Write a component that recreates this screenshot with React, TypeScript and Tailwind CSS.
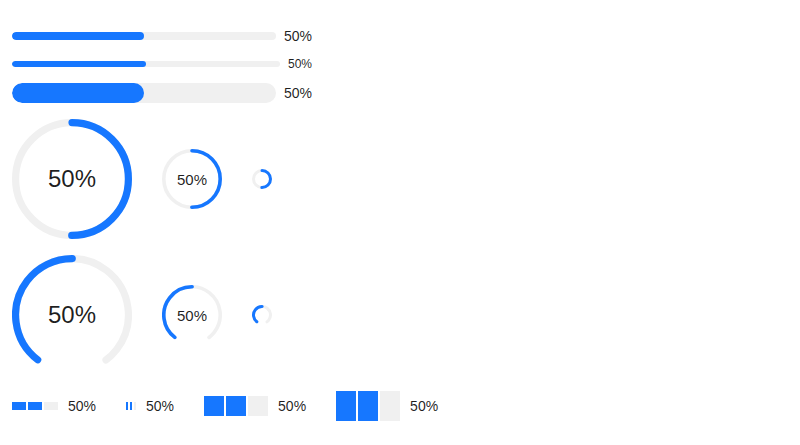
import React from "react";

const BLUE = "#1677ff";
const TRACK = "#f0f0f0";
const TEXT = "text-[rgba(0,0,0,0.88)]";

function Line({ h, small }: { h: number; small?: boolean }) {
  return (
    <div className={`flex items-center w-[300px] ${small ? "h-[20px]" : "h-[22px]"}`}>
      <div className="flex-1 rounded-full bg-[#f0f0f0] overflow-hidden" style={{ height: h }}>
        <div className="h-full w-1/2 rounded-full bg-[#1677ff]" />
      </div>
      <span
        className={`${small ? "text-[12px] w-[32px]" : "text-[14px] w-[36px]"} pl-[8px] whitespace-nowrap ${TEXT}`}
      >
        50%
      </span>
    </div>
  );
}

function Circle({ size, dashboard }: { size: number; dashboard?: boolean }) {
  const sw = size <= 20 ? 15 : 6;
  const r = 50 - sw / 2;
  const c = 2 * Math.PI * r;
  const gap = dashboard ? 75 : 0;
  const visible = c * (1 - gap / 360);
  const rot = dashboard ? 90 + gap / 2 : -90;
  const font = size >= 100 ? "text-[24px]" : "text-[15px]";
  return (
    <div className="relative flex items-center justify-center" style={{ width: size, height: size }}>
      <svg viewBox="0 0 100 100" width={size} height={size} className="absolute inset-0">
        <g transform={`rotate(${rot} 50 50)`}>
          <circle
            cx="50"
            cy="50"
            r={r}
            fill="none"
            stroke={TRACK}
            strokeWidth={sw}
            strokeLinecap="round"
            strokeDasharray={`${visible} ${c}`}
          />
          <circle
            cx="50"
            cy="50"
            r={r}
            fill="none"
            stroke={BLUE}
            strokeWidth={sw}
            strokeLinecap="round"
            strokeDasharray={`${visible / 2} ${c}`}
          />
        </g>
      </svg>
      {size > 20 && <span className={`relative ${font} ${TEXT} leading-none`}>50%</span>}
    </div>
  );
}

function Steps({ w, h }: { w: number; h: number }) {
  return (
    <div className="flex items-center">
      <div className="flex gap-[2px]">
        <div className="bg-[#1677ff]" style={{ width: w, height: h }} />
        <div className="bg-[#1677ff]" style={{ width: w, height: h }} />
        <div className="bg-[#f0f0f0]" style={{ width: w, height: h }} />
      </div>
      <span className={`ml-[10px] text-[14px] ${TEXT}`}>50%</span>
    </div>
  );
}

export default function App() {
  return (
    <div
      className="w-[800px] h-[445px] bg-white pl-[12px] pt-[25px] flex flex-col"
      style={{ fontFamily: '"Liberation Sans", Arial, sans-serif' }}
    >
      <Line h={8} />
      <div className="mt-[7px]">
        <Line h={6} small />
      </div>
      <div className="mt-[8px]">
        <Line h={20} />
      </div>
      <div className="mt-[15px] flex items-center gap-[30px]">
        <Circle size={120} />
        <Circle size={60} />
        <Circle size={20} />
      </div>
      <div className="mt-[16px] flex items-center gap-[30px]">
        <Circle size={120} dashboard />
        <Circle size={60} dashboard />
        <Circle size={20} dashboard />
      </div>
      <div className="mt-[16px] h-[30px] flex items-center gap-[30px]">
        <Steps w={14} h={8} />
        <Steps w={2} h={8} />
        <Steps w={20} h={20} />
        <Steps w={20} h={30} />
      </div>
    </div>
  );
}
